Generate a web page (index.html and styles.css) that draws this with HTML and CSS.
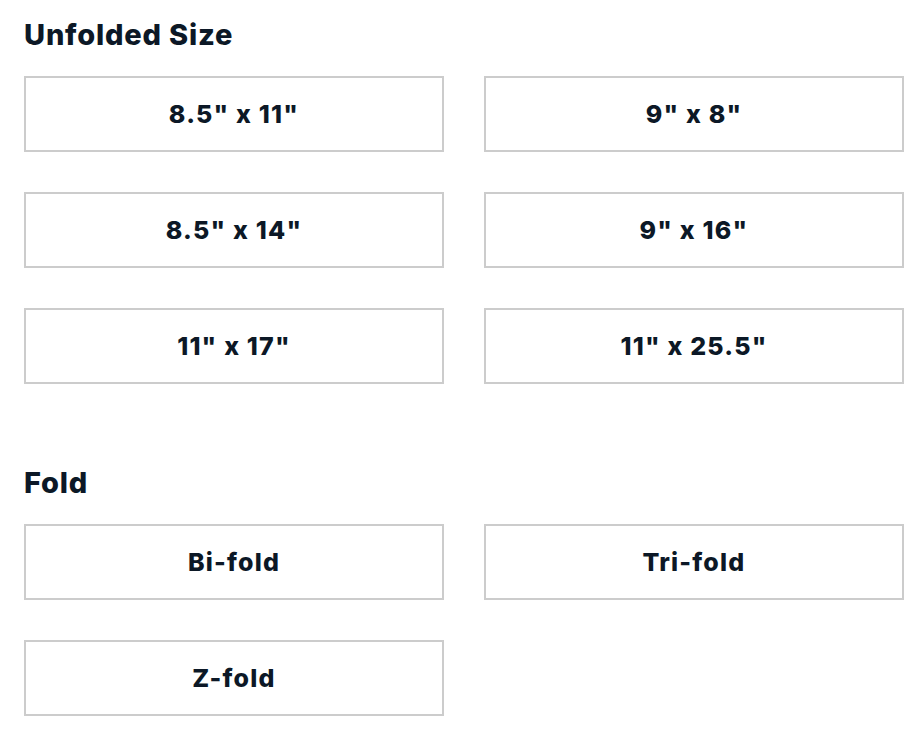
FILE: index.html
```html
<!DOCTYPE html>
<html lang="en">
<head>
<meta charset="utf-8">
<title>Options</title>
<link rel="stylesheet" href="styles.css">
</head>
<body>
<main class="page">
  <section class="group">
    <h2 class="group-title">Unfolded Size</h2>
    <div class="options">
      <button class="option">8.5" x 11"</button>
      <button class="option">9" x 8"</button>
      <button class="option">8.5" x 14"</button>
      <button class="option">9" x 16"</button>
      <button class="option">11" x 17"</button>
      <button class="option">11" x 25.5"</button>
    </div>
  </section>
  <section class="group">
    <h2 class="group-title">Fold</h2>
    <div class="options">
      <button class="option">Bi-fold</button>
      <button class="option">Tri-fold</button>
      <button class="option">Z-fold</button>
    </div>
  </section>
</main>
</body>
</html>
```
FILE: styles.css
```css
html, body {
  margin: 0;
  padding: 0;
  background: #ffffff;
}
body {
  font-family: "Inter", "Noto Sans", sans-serif;
  color: #0c1826;
}
.page {
  padding: 16px 20px 0 24px;
  display: flex;
  flex-direction: column;
  gap: 80px;
}
.group-title {
  margin: 0 0 22px 0;
  font-size: 29px;
  line-height: 38px;
  font-weight: 800;
  letter-spacing: 0.8px;
}
.options {
  display: grid;
  grid-template-columns: 420px 420px;
  column-gap: 40px;
  row-gap: 40px;
}
.option {
  height: 76px;
  box-sizing: border-box;
  border: 2px solid #cccccc;
  background: #ffffff;
  font-family: inherit;
  color: inherit;
  font-size: 25px;
  font-weight: 800;
  letter-spacing: 1.2px;
  padding: 0;
  margin: 0;
}
```
